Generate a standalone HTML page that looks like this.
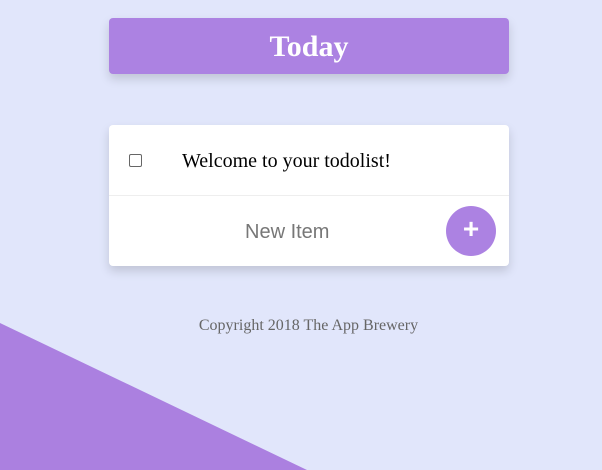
<!DOCTYPE html>
<html><head><style>
html,body{margin:0;padding:0;width:602px;height:470px;overflow:hidden;background:#e1e6fb;position:relative;font-family:"Liberation Serif",serif}
.tri{position:absolute;left:0;top:0;width:602px;height:470px}
.hdr{position:absolute;left:109px;top:18px;width:400px;height:56px;background:#ac82e2;border-radius:4px;box-shadow:0 5px 10px rgba(0,0,0,.15);text-align:center;color:#fff;font-weight:bold;font-size:30px;line-height:58px}
.card{position:absolute;left:109px;top:125px;width:400px;height:141px;background:#fff;border-radius:4px;box-shadow:0 5px 10px rgba(0,0,0,.15)}
.row1{height:70px;border-bottom:1px solid #eee;position:relative}
.cb{position:absolute;left:20px;top:29px;width:11px;height:11px;border:1px solid #666;border-radius:2px;background:#fff}
.t1{position:absolute;left:73px;top:25px;font-size:20px;color:#000}
.ni{position:absolute;left:136px;top:96px;font-family:"Liberation Sans",sans-serif;font-size:20px;color:#777}
.btn{position:absolute;left:337px;top:81px;width:50px;height:50px;border-radius:50%;background:#ac82e2;color:#fff;font-family:"Liberation Sans",sans-serif;font-size:28px;font-weight:bold;text-align:center;line-height:46px}
.ft{position:absolute;left:0;width:617px;top:317px;text-align:center;font-size:16px;color:#666}
</style></head><body>
<svg class="tri"><polygon points="0,323 307,470 0,470" fill="#ab80e0"/></svg>
<div class="hdr">Today</div>
<div class="card">
<div class="row1"><div class="cb"></div><div class="t1">Welcome to your todolist!</div></div>
<div class="ni">New Item</div>
<div class="btn">+</div>
</div>
<div class="ft">Copyright 2018 The App Brewery</div>
</body></html>
